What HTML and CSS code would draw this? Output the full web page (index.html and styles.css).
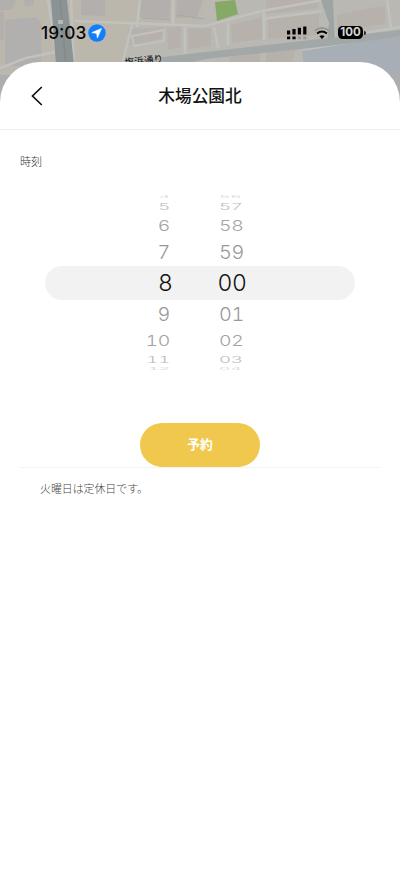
FILE: index.html
```html
<!DOCTYPE html>
<html lang="ja">
<head>
<meta charset="utf-8">
<title>木場公園北</title>
<link rel="stylesheet" href="styles.css">
</head>
<body>
<div class="screen">
  <svg class="map" viewBox="0 0 400 130" aria-hidden="true">
    <rect width="400" height="130" fill="#bab8b3"/>
    <path d="M0 0H49L57 65L0 72Z" fill="#bbb7ac"/>
    <path d="M5 20L36 17L42 24L41 66L5 66Z" fill="#b2afaf"/>
    <path d="M24 0H34V5L25 7ZM0 0H16L12 9L0 11Z" fill="#b2afaf"/>
    <path d="M66 0H207L199 23L129 24L121 65H78Z" fill="#bbb7ad"/>
    <path d="M81 0H105V16L81 15ZM140 0H171L169 19L139 17ZM177 0H203L197 17L176 18ZM0 12H4V40H0Z" fill="#b3afad"/>
    <path d="M128 29L164 27L162 39L130 45ZM167 28L181 26V47L168 50ZM188 29L211 28V46L188 49ZM231 25L262 17V39L232 43ZM268 18L319 14V35L268 39ZM337 15L385 5V24L337 31ZM266 0H318V8L266 14ZM230 57L260 52V62H230ZM266 51L296 49L292 62H266Z" fill="#b6b2ab"/>
    <g fill="none" stroke="#c1c2be">
      <path d="M48 0L58 65M71 0L74 65M74 21L205 26L262 11L323 0M137 27L140 0M122 65L132 25M173 0V24M185 27V54M228 23V45M214 27L218 48M264 9V40M262 19L322 11M333 20L335 38L400 27M387 0L391 28M0 68L26 58L55 52" stroke-width="2.5"/>
      <path d="M132 36L164 30V41L134 46ZM302 51L400 34" stroke-width="2"/>
      <path d="M142 18L170 20M177 15L204 19" stroke="#a9a7a4" stroke-width="1"/>
    </g>
    <path d="M215 2L235 0L238 14L217 21Z" fill="#86a967"/>
    <path d="M321 0H333L335 40L327 43L329 23Z" fill="#9da5a3"/>
    <path d="M120 62L197 53L275 44L400 30V38L282 51L205 59L190 63H119Z" fill="#a1a8a7"/>
    <path d="M302 51L400 36V130H310Z" fill="#a8aeb5"/>
    <path d="M51 0H67L74 65H56Z" fill="#8c9395"/>
    <path d="M60 0L66 65" stroke="#858c8e" stroke-width="2"/>
    <rect x="58" y="20" width="5" height="4" fill="#b6b8b5"/>
    <path d="M0 75H14V110H0ZM390 75H400V110H390Z" fill="#adadad"/>
    <text class="street" x="125" y="66" transform="rotate(-6 125 67)">塩浜通り</text>
  </svg>

  <header class="status">
    <span class="clock">19:03</span>
    <svg class="location" viewBox="0 0 18 18"><circle cx="9" cy="9" r="8.7" fill="#117ffa"/><path d="M13.5 4.5L3.8 8.6L8.6 9.4L9.4 14Z" fill="#fff" stroke="#fff" stroke-width=".6" stroke-linejoin="round"/></svg>
    <svg class="signal" viewBox="0 0 20 14">
      <path d="M0 4.5h3.2v4H0zM5.4 3h3.2v5.5H5.4zM10.8 1.8h3.2v6.7h-3.2zM16.2.5h3.2v8h-3.2zM0 10.4h3.2v2.8H0zM5.4 10.4h3.2v2.8H5.4z"/>
      <path d="M10.8 10.4h3.2v2.8h-3.2zM16.2 10.4h3.2v2.8h-3.2z" fill="#999b9b"/>
    </svg>
    <svg class="wifi" viewBox="0 0 16 12">
      <path d="M.9 3.8Q8-2 15.1 3.8" fill="none" stroke="#929694" stroke-width="1.8"/>
      <path d="M3.1 6.6Q8 2.5 12.9 6.6" fill="none" stroke="#000" stroke-width="2"/>
      <path d="M5.4 9.3Q8 7.2 10.6 9.3L8 12Z"/>
    </svg>
    <span class="battery">100</span><i class="cap"></i>
  </header>

  <main class="sheet">
    <div class="titlebar">
      <svg class="back" viewBox="0 0 12 20"><path d="M10.8 1L1.5 10L10.8 19" fill="none" stroke="#111" stroke-width="1.7"/></svg>
      <h1>木場公園北</h1>
    </div>
    <h2>時刻</h2>
    <div class="picker">
      <div class="row edge"><span>4</span><span>56</span></div>
      <div class="row far"><span>5</span><span>57</span></div>
      <div class="row mid"><span>6</span><span>58</span></div>
      <div class="row near"><span>7</span><span>59</span></div>
      <div class="row selected"><span>8</span><span>00</span></div>
      <div class="row near"><span>9</span><span>01</span></div>
      <div class="row mid"><span>10</span><span>02</span></div>
      <div class="row far"><span>11</span><span>03</span></div>
      <div class="row edge"><span>12</span><span>04</span></div>
    </div>
    <button class="reserve">予約</button>
    <p class="note">火曜日は定休日です。</p>
  </main>
</div>
</body>
</html>
```

FILE: styles.css
```css
* { box-sizing: border-box; }
body { margin: 0; background: #fff; font-family: Inter, "Noto Sans CJK JP", sans-serif; }
.screen { position: relative; width: 400px; height: 870px; overflow: hidden; }
.map { position: absolute; top: 0; left: 0; width: 400px; height: 130px; }
.street { font-size: 9.7px; font-weight: 500; fill: #222; stroke: #c2c2bf; stroke-width: 1px; paint-order: stroke; }
.status { position: relative; display: flex; align-items: center; height: 62px; padding: 3px 0 0 41px; }
.clock { width: 47px; font-size: 17.3px; font-weight: 500; line-height: 20px; color: #080808; }
.location { width: 18px; height: 18px; }
.signal { width: 20px; height: 14px; margin-left: 181px; }
.wifi { width: 16px; height: 12px; margin-left: 7px; }
.battery { width: 25px; height: 13px; margin-left: 8px; border-radius: 4.5px; background: #000; color: #d6d6d2; font-size: 11.5px; font-weight: 700; line-height: 13px; text-align: center; }
.cap { width: 1.5px; height: 4px; margin-left: 1px; border-radius: 0 2px 2px 0; background: #222; }
.sheet { position: relative; height: 808px; border-radius: 40px 40px 0 0; background: #fff; }
.titlebar { display: flex; align-items: center; height: 68px; padding-left: 31px; border-bottom: 1px solid #eee; }
.back { width: 12px; height: 20px; }
h1 { width: 200px; margin: 0 0 0 57px; color: #111; font-size: 16.7px; font-weight: 500; line-height: 24px; text-align: center; }
h2 { margin: 22.5px 0 0 20px; color: #333; font-size: 11px; font-weight: 300; line-height: 18px; }
.picker { margin: 23.5px 45px 0; }
.row { display: grid; grid-template: 100% / 127px 1fr; column-gap: 46px; align-items: center; color: #999; font-size: 22px; line-height: 24px; font-weight: 400; font-variant-numeric: tabular-nums; letter-spacing: -.3px; }
.row span { display: block; transform-origin: left center; }
.row span:first-child { text-align: right; transform-origin: right center; }
.selected { grid-template-columns: 127.5px 1fr; column-gap: 45px; height: 34px; border-radius: 17px; background: #f2f2f2; color: #111; font-size: 23px; font-weight: 350; }
.near { height: 28px; }
.mid { height: 25px; color: #a3a3a3; }
.far { height: 13px; color: #bbb; }
.edge { height: 6px; color: #d6d6d6; }
.near, .mid, .far, .edge { grid-template-columns: 125px 1fr; column-gap: 48.5px; font-weight: 350; }
.near span { transform: scale(.9, .87); }
.mid span { transform: scale(.88, .68); }
.far span { transform: scale(.85, .42); }
.edge span { transform: scale(.8, .15); }
.reserve { display: block; width: 120px; height: 44px; margin: 50.5px auto 0; padding: 1px 0 0; border: 0; border-radius: 22px; background: #f0c84d; color: #fff; font: 700 12.8px/42px Inter, "Noto Sans CJK JP", sans-serif; }
.note { margin: 0 20px; padding: 12px 20px; border-top: 1px solid #f3f3f3; color: #444; font-size: 10.9px; font-weight: 300; line-height: 18px; }
```
